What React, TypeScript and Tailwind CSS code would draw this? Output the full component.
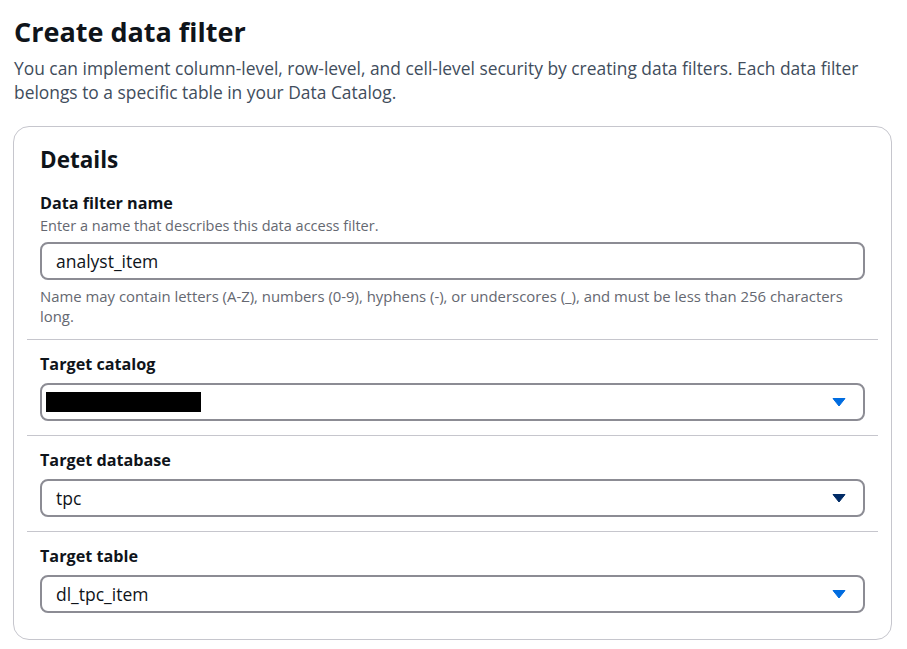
import React from "react";

function Caret({ dark }: { dark?: boolean }) {
  return (
    <svg width="14" height="10" viewBox="0 0 14 10" className="shrink-0">
      <path d="M1 1.5 H13 L7 9 Z" fill={dark ? "#002b66" : "#006ce0"} stroke={dark ? "#002b66" : "#006ce0"} strokeWidth="1" strokeLinejoin="round" />
    </svg>
  );
}

function Select({ children, dark }: { children?: React.ReactNode; dark?: boolean }) {
  return (
    <div className="h-[38px] border-2 border-[#8c8c94] rounded-[8px] flex items-center pl-[14px] pr-[17px] justify-between">
      <div className="text-[17.5px] text-[#0f141a]">{children}</div>
      <Caret dark={dark} />
    </div>
  );
}

function Label({ children }: { children: React.ReactNode }) {
  return <div className="text-[16.2px] leading-[22px] font-bold text-[#0f141a]">{children}</div>;
}

export default function App() {
  return (
    <div className="bg-white w-[907px] h-[649px] overflow-hidden" style={{ fontFamily: '"Open Sans", "Noto Sans", sans-serif' }}>
      <div className="pl-[14px] pr-[16px] pt-[14px]">
        <h1 className="text-[27px] leading-[36px] font-bold text-[#0f141a]">Create data filter</h1>
        <p className="text-[17.4px] leading-[24px] text-[#414d5c] mt-[6px]">
          You can implement column-level, row-level, and cell-level security by creating data filters. Each data filter belongs to a specific table in your Data Catalog.
        </p>
      </div>
      <div className="ml-[13px] mr-[15px] mt-[22px] border border-[#c6c6cd] rounded-[16px] px-[13px] pt-[18px] pb-[26px]">
        <div className="px-[13px]">
          <h2 className="text-[22.5px] leading-[30px] font-bold text-[#0f141a]">Details</h2>
          <div className="mt-[17px]">
            <Label>Data filter name</Label>
          </div>
          <div className="mt-[2px] text-[14.5px] leading-[20px] text-[#656871]">Enter a name that describes this data access filter.</div>
          <div className="mt-[6px] h-[38px] border-2 border-[#8c8c94] rounded-[8px] flex items-center pl-[14px]">
            <span className="text-[17.5px] text-[#0f141a]">analyst_item</span>
          </div>
          <div className="mt-[6px] text-[14.9px] leading-[20px] text-[#656871]">
            Name may contain letters (A-Z), numbers (0-9), hyphens (-), or underscores (_), and must be less than 256 characters long.
          </div>
        </div>
        <div className="mt-[13px] border-t border-[#c6c6cd]" />
        <div className="px-[13px] pt-[13px] pb-[14px]">
          <Label>Target catalog</Label>
          <div className="mt-[8px]">
            <Select>
              <div className="w-[155px] h-[20px] bg-black ml-[-10px]" />
            </Select>
          </div>
        </div>
        <div className="border-t border-[#c6c6cd]" />
        <div className="px-[13px] pt-[13px] pb-[14px]">
          <Label>Target database</Label>
          <div className="mt-[8px]">
            <Select dark>tpc</Select>
          </div>
        </div>
        <div className="border-t border-[#c6c6cd]" />
        <div className="px-[13px] pt-[13px]">
          <Label>Target table</Label>
          <div className="mt-[8px]">
            <Select>dl_tpc_item</Select>
          </div>
        </div>
      </div>
    </div>
  );
}
